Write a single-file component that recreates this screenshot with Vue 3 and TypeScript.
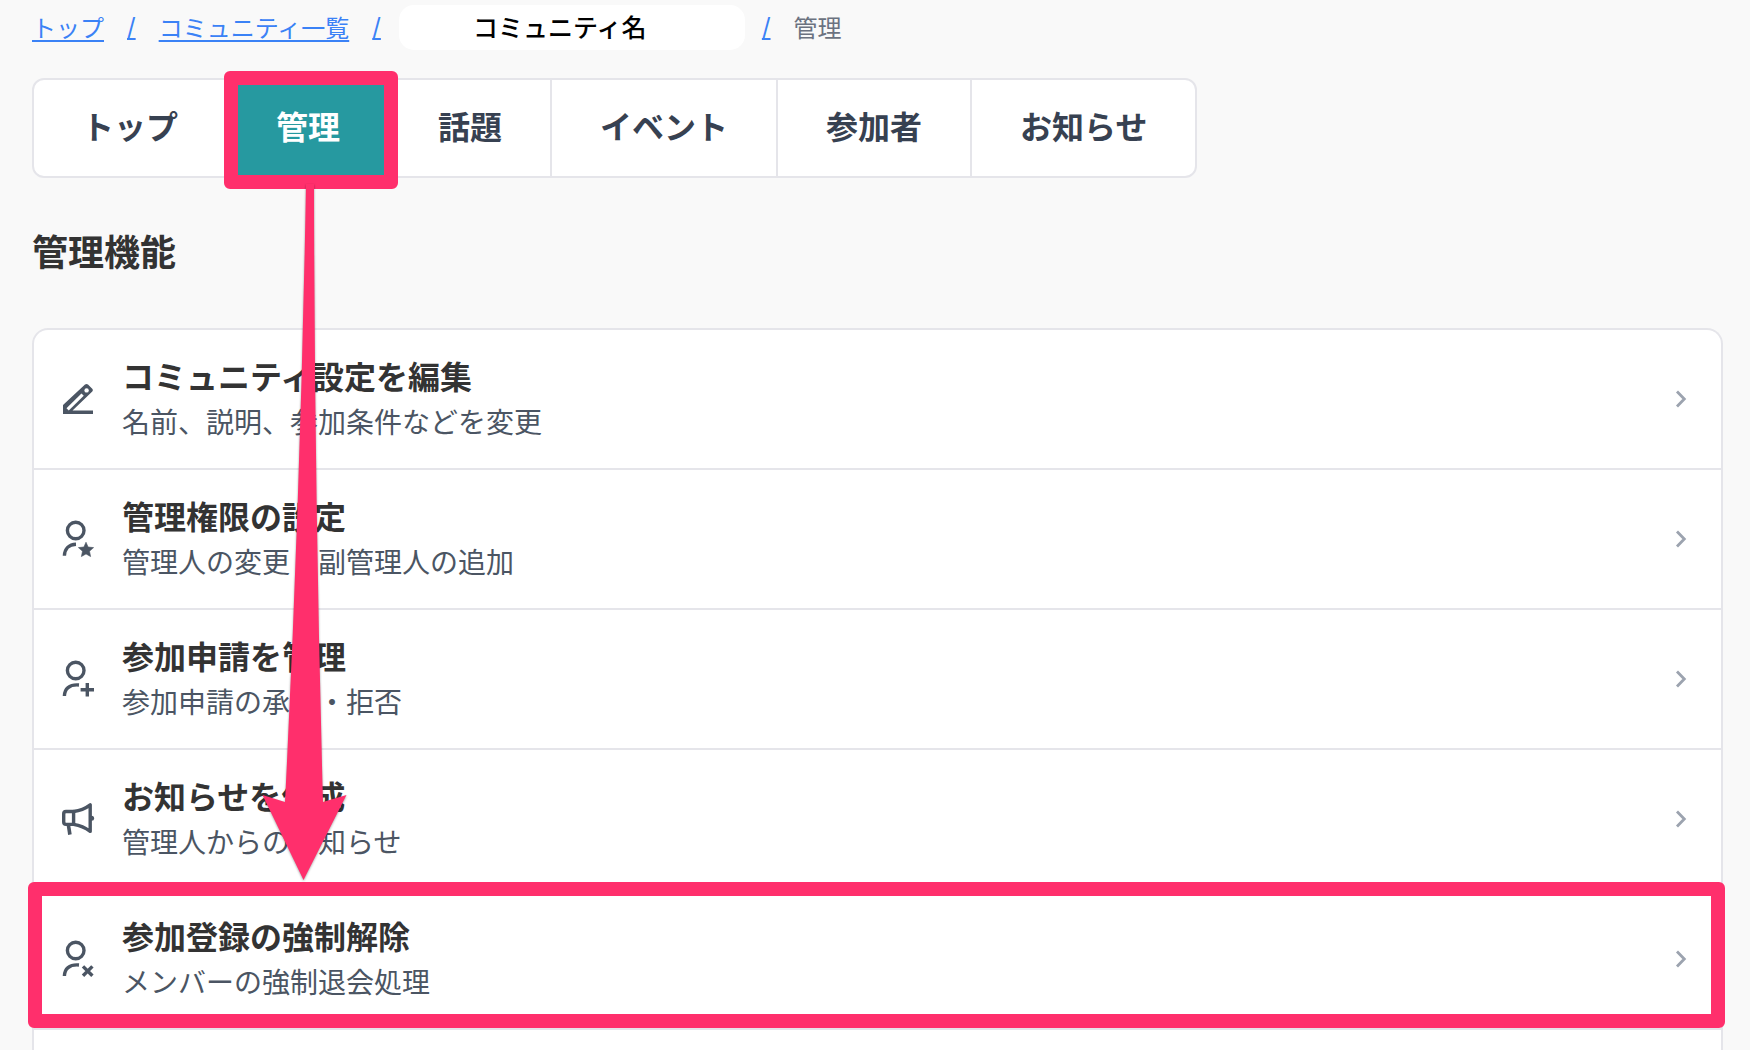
<script setup lang="ts">
interface Tab {
  label: string
  active?: boolean
}

type IconName = 'edit' | 'star' | 'add' | 'megaphone' | 'remove'

interface MenuItem {
  icon: IconName
  title: string
  description: string
  highlighted?: boolean
}

const tabs: Tab[] = [
  { label: 'トップ' },
  { label: '管理', active: true },
  { label: '話題' },
  { label: 'イベント' },
  { label: '参加者' },
  { label: 'お知らせ' },
]

const items: MenuItem[] = [
  { icon: 'edit', title: 'コミュニティ設定を編集', description: '名前、説明、参加条件などを変更' },
  { icon: 'star', title: '管理権限の設定', description: '管理人の変更・副管理人の追加' },
  { icon: 'add', title: '参加申請を管理', description: '参加申請の承認・拒否' },
  { icon: 'megaphone', title: 'お知らせを作成', description: '管理人からのお知らせ' },
  { icon: 'remove', title: '参加登録の強制解除', description: 'メンバーの強制退会処理', highlighted: true },
]
</script>

<template>
  <div class="page">
    <nav class="breadcrumb" aria-label="パンくず">
      <a href="#">トップ</a>
      <span class="slash">/</span>
      <a href="#">コミュニティ一覧</a>
      <span class="slash">/</span>
      <span class="community">コミュニティ名</span>
      <span class="slash">/</span>
      <span class="current">管理</span>
    </nav>

    <nav class="tabs" aria-label="コミュニティ">
      <a v-for="tab in tabs" :key="tab.label" href="#" class="tab" :class="{ active: tab.active }">
        {{ tab.label }}
        <span v-if="tab.active" class="frame tab-frame"></span>
      </a>
    </nav>

    <h1 class="heading">管理機能</h1>

    <div class="list">
      <a v-for="item in items" :key="item.title" href="#" class="row">
        <svg class="icon" viewBox="10 9 36 40" aria-hidden="true">
          <g v-if="item.icon === 'edit'">
            <path d="M13 44V35L35 14.5Q36.5 13.4 38 14.5L42.5 19Q43.4 20.4 42.3 21.6L22.5 40.6H43V44Z" fill="currentColor" />
            <path d="M17.6 39.4L32.6 24.6" stroke="#fff" stroke-width="3.2" />
            <circle cx="36.6" cy="20.4" r="2.2" fill="#fff" />
          </g>
          <g v-else-if="item.icon === 'megaphone'" fill="none" stroke="currentColor" stroke-width="3.4" stroke-linejoin="round">
            <path d="M23.6 21.5H16Q13.7 21.5 13.7 23.8V32Q13.7 34.4 16 34.4H23.6Z" />
            <path d="M23.6 21.5Q33 20.3 40.2 14.8V41.4Q33 35.9 23.6 34.4" />
            <path d="M18.4 35L19.9 44.6" stroke-width="3.6" stroke-linejoin="miter" />
            <circle cx="41.6" cy="28.3" r="2.5" fill="currentColor" stroke="none" />
          </g>
          <g v-else fill="none" stroke="currentColor" stroke-width="3.4">
            <circle cx="25.7" cy="20.5" r="8.3" />
            <path v-if="item.icon === 'star'" d="M14.4 45.8C14.6 39 19 34.4 26 34.2" />
            <path v-else d="M14.4 46C14.6 39 19 34.2 29 35" />
            <path
              v-if="item.icon === 'star'"
              d="M36 32.2L38.1 37L43.6 37.6L39.5 41.2L40.6 46.6L36 43.9L31.4 46.6L32.5 41.2L28.4 37.6L33.9 37Z"
              fill="currentColor"
              stroke="currentColor"
              stroke-width="0.6"
            />
            <path v-if="item.icon === 'add'" d="M30.6 39.7H44M37.3 33V46.4" />
            <path v-if="item.icon === 'remove'" d="M33 36.4L42.4 45.8M42.4 36.4L33 45.8" />
          </g>
        </svg>
        <span class="texts">
          <span class="title">{{ item.title }}</span>
          <span class="description">{{ item.description }}</span>
        </span>
        <svg class="chevron" viewBox="0 0 12 20" aria-hidden="true">
          <path d="M2 2.5L9.3 10L2 17.5" fill="none" stroke="currentColor" stroke-width="2.8" />
        </svg>
        <span v-if="item.highlighted" class="frame row-frame"></span>
      </a>
    </div>

    <svg class="arrow" viewBox="0 0 84 700" aria-hidden="true">
      <path d="M44 -6H52Q52.5 306 61 612L84.5 605L41.5 690L0.5 605L23 612Q38.5 306 44 -6Z" fill="#ff2f6c" />
    </svg>
  </div>
</template>

<style>
body {
  margin: 0;
  background: #f9f9f9;
}
</style>

<style scoped>
.page {
  position: relative;
  display: flex;
  flex-direction: column;
  box-sizing: border-box;
  min-height: 100vh;
  padding: 5px 27px 0 32px;
  overflow: hidden;
  color: #333;
  font-family: "Noto Sans CJK JP", sans-serif;
}

a {
  color: inherit;
  text-decoration: none;
}

.breadcrumb {
  display: flex;
  align-items: center;
  gap: 23px;
  font-size: 24px;
  line-height: 43px;
}

.breadcrumb > * {
  padding-bottom: 2px;
}

.breadcrumb a,
.slash {
  color: #3b82f6;
  text-decoration: underline;
  text-decoration-thickness: 2px;
  text-underline-offset: 3px;
}

.slash {
  font-family: Inter, sans-serif;
}

.community {
  box-sizing: border-box;
  width: 346px;
  margin: 0 -6px 0 -5px;
  padding-left: 74px;
  border-radius: 15px;
  background: #fff;
  color: #000;
  font-size: 25px;
  font-weight: 500;
}

.current {
  color: #6b7280;
}

.tabs {
  display: flex;
  align-self: flex-start;
  margin-top: 28px;
  border: 2px solid #e5e5ea;
  border-radius: 12px;
  background: #fff;
}

.tab {
  position: relative;
  padding: 0 48px 6px;
  color: #374151;
  font-size: 32px;
  font-weight: 700;
  line-height: 90px;
  white-space: nowrap;
}

.tab + .tab {
  border-left: 2px solid #e5e5ea;
}

.tab.active {
  border-color: #2699a0;
  background: #2699a0;
  color: #fff;
}

.frame {
  position: absolute;
  z-index: 1;
  border: 14px solid #ff2f6c;
  border-radius: 6px;
}

.tab-frame {
  inset: -9px -10px -13px -4px;
}

.heading {
  margin: 45px 0 51px;
  font-size: 36px;
  font-weight: 700;
  line-height: 54px;
}

.list {
  flex: 1;
  border: 2px solid #e5e5ea;
  border-bottom: 0;
  border-radius: 16px 16px 0 0;
  background: #fff;
}

.row {
  position: relative;
  display: flex;
  align-items: center;
  gap: 26px;
  height: 138px;
  padding: 0 34px 0 26px;
  border-bottom: 2px solid #e5e5ea;
}

.icon {
  flex: none;
  width: 36px;
  height: 40px;
  color: #4b5563;
}

.texts {
  display: flex;
  flex: 1;
  flex-direction: column;
  padding-bottom: 4px;
}

.title {
  font-size: 32px;
  font-weight: 700;
  line-height: 48px;
}

.description {
  color: #4b5563;
  font-size: 28px;
  line-height: 44px;
}

.chevron {
  width: 12px;
  height: 20px;
  color: #9ca3af;
}

.row-frame {
  inset: -8px -4px 0 -6px;
}

.arrow {
  position: absolute;
  z-index: 2;
  top: 190px;
  left: 262px;
  width: 84px;
  height: 700px;
  overflow: visible;
  filter: drop-shadow(0 1px 1px rgba(0, 0, 0, 0.35));
  pointer-events: none;
}
</style>
